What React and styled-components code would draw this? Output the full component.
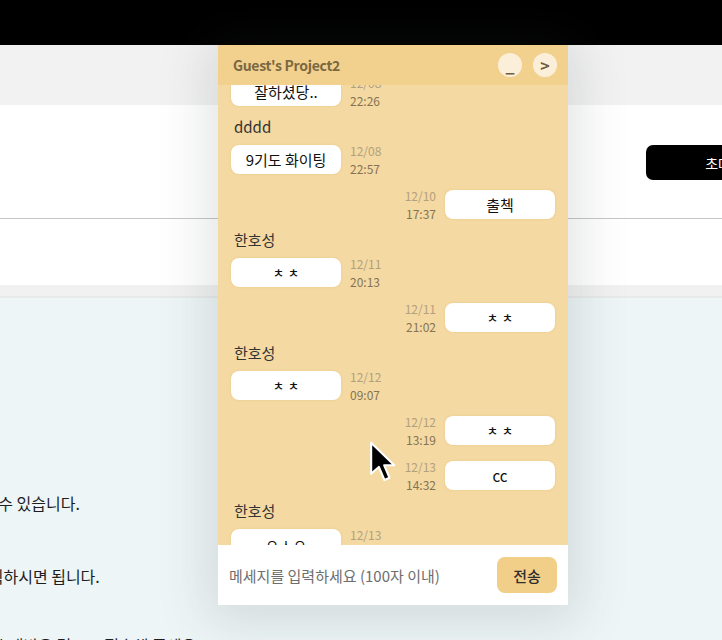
import React from "react";
import styled, { createGlobalStyle } from "styled-components";

const GlobalStyle = createGlobalStyle`
  html, body {
    margin: 0;
    padding: 0;
    overflow: hidden;
    font-family: "Noto Sans CJK KR", "Noto Sans", sans-serif;
  }
  * { box-sizing: border-box; }
`;

const messages = [
  { side: "left", text: "잘하셨당..", date: "12/08", time: "22:26" },
  { side: "left", name: "dddd", text: "9기도 화이팅", date: "12/08", time: "22:57" },
  { side: "right", text: "출첵", date: "12/10", time: "17:37" },
  { side: "left", name: "한호성", text: "ㅊㅊ", date: "12/11", time: "20:13", small: true },
  { side: "right", text: "ㅊㅊ", date: "12/11", time: "21:02", small: true },
  { side: "left", name: "한호성", text: "ㅊㅊ", date: "12/12", time: "09:07", small: true },
  { side: "right", text: "ㅊㅊ", date: "12/12", time: "13:19", small: true },
  { side: "right", text: "cc", date: "12/13", time: "14:32" },
  { side: "left", name: "한호성", text: "ㅇㅅㅇ", date: "12/13", time: "15:01" },
];

const App = () => {
  return (
    <>
      <GlobalStyle />
      <Page>
        <TopBar />
        <SubBar />
        <Hero>
          <HeroRow>
            <InviteButton>초대하기</InviteButton>
          </HeroRow>
          <HeroBottom />
        </Hero>
        <Band />
        <Content>
          <Line $shift={-20} $top={0}>할 수 있습니다.</Line>
          <Line $shift={-26} $top={49}>클릭하시면 됩니다.</Line>
          <Line $shift={-6} $top={45}>초대받은 링크로 접속해 주세요.</Line>
        </Content>
      </Page>

      <ChatWidget>
        <ChatHeader>
          <Title>Guest's Project2</Title>
          <HeaderButtons>
            <RoundButton>_</RoundButton>
            <RoundButton>&gt;</RoundButton>
          </HeaderButtons>
        </ChatHeader>
        <ChatBody>
          <MessageList>
            {messages.map((m, i) => (
              <MessageGroup key={i}>
                {m.name && <Name>{m.name}</Name>}
                <MessageRow $side={m.side}>
                  <Bubble $small={m.small}>{m.text}</Bubble>
                  <Stamp $side={m.side}>
                    <StampDate>{m.date}</StampDate>
                    <StampTime>{m.time}</StampTime>
                  </Stamp>
                </MessageRow>
              </MessageGroup>
            ))}
          </MessageList>
        </ChatBody>
        <InputBar>
          <MessageInput placeholder="메세지를 입력하세요 (100자 이내)" />
          <SendButton>전송</SendButton>
        </InputBar>
      </ChatWidget>

      <Cursor width="30" height="44" viewBox="0 0 14 20">
        <path
          d="M1 1 L1 15.5 L4.6 12.3 L7.2 18.4 L9.6 17.4 L7.1 11.5 L11.8 11.5 Z"
          fill="#000"
          stroke="#fff"
          strokeWidth="1"
          strokeLinejoin="round"
        />
      </Cursor>
    </>
  );
};

const Page = styled.div`
  width: 722px;
  height: 640px;
  overflow: hidden;
  display: flex;
  flex-direction: column;
`;

const TopBar = styled.div`
  height: 45px;
  background: #000;
  flex-shrink: 0;
`;

const SubBar = styled.div`
  height: 60px;
  background: #f2f2f2;
  flex-shrink: 0;
`;

const Hero = styled.div`
  background: #fff;
  flex-shrink: 0;
`;

const HeroRow = styled.div`
  height: 114px;
  display: flex;
  align-items: center;
  justify-content: flex-end;
  border-bottom: 1px solid #c6c6c6;
  padding-top: 2px;
`;

const HeroBottom = styled.div`
  height: 66px;
`;

const InviteButton = styled.button`
  width: 170px;
  height: 35px;
  margin-right: -94px;
  border: none;
  border-radius: 7px;
  background: #000;
  color: #fff;
  font-family: "Noto Sans CJK KR", sans-serif;
  font-size: 14px;
  text-align: center;
`;

const Band = styled.div`
  height: 13px;
  background: #f1f1f1;
  border-bottom: 2px solid #e8eaea;
  flex-shrink: 0;
`;

const Content = styled.div`
  flex: 1;
  background: #edf5f6;
  padding-top: 193px;
  display: flex;
  flex-direction: column;
`;

const Line = styled.p`
  margin: ${(p) => p.$top}px 0 0 ${(p) => p.$shift}px;
  font-size: 16px;
  line-height: 24px;
  font-weight: 400;
  color: #1e1e1e;
  white-space: nowrap;
`;

const ChatWidget = styled.div`
  position: absolute;
  left: 218px;
  top: 45px;
  width: 350px;
  height: 560px;
  display: flex;
  flex-direction: column;
  background: #f4d9a2;
  box-shadow: 0 6px 48px 10px rgba(60, 70, 70, 0.15);
`;

const ChatHeader = styled.div`
  height: 40px;
  flex-shrink: 0;
  display: flex;
  align-items: center;
  justify-content: space-between;
  padding: 0 11px 0 15px;
  background: #f2d08e;
  z-index: 1;
`;

const Title = styled.div`
  font-size: 14px;
  font-weight: 700;
  color: #7a6842;
  letter-spacing: -0.3px;
`;

const HeaderButtons = styled.div`
  display: flex;
  gap: 11px;
`;

const RoundButton = styled.button`
  width: 24px;
  height: 24px;
  border-radius: 50%;
  border: none;
  padding: 0;
  background: #fcefd9;
  color: #6e5c3c;
  font-family: "Noto Sans CJK KR", sans-serif;
  font-size: 16px;
  font-weight: 700;
  line-height: 22px;
`;

const ChatBody = styled.div`
  flex: 1;
  overflow: hidden;
`;

const MessageList = styled.div`
  margin-top: -8px;
  padding: 0 13px;
  display: flex;
  flex-direction: column;
  gap: 16px;
`;

const MessageGroup = styled.div`
  display: flex;
  flex-direction: column;
`;

const Name = styled.div`
  margin: -4px 0 9px 3px;
  font-size: 15px;
  line-height: 18px;
  color: #333;
`;

const MessageRow = styled.div`
  height: 29px;
  display: flex;
  align-items: center;
  gap: 9px;
  flex-direction: ${(p) => (p.$side === "right" ? "row-reverse" : "row")};
`;

const Bubble = styled.div`
  width: 110px;
  height: 29px;
  flex-shrink: 0;
  display: flex;
  align-items: center;
  justify-content: center;
  background: #fff;
  border-radius: 8px;
  box-shadow: 0 0 2px rgba(220, 180, 100, 0.5);
  font-size: ${(p) => (p.$small ? "12px" : "15px")};
  font-weight: ${(p) => (p.$small ? 500 : 400)};
  letter-spacing: ${(p) => (p.$small ? "4px" : "0")};
  text-indent: ${(p) => (p.$small ? "4px" : "0")};
  color: #111;
`;

const Stamp = styled.div`
  display: flex;
  flex-direction: column;
  align-items: ${(p) => (p.$side === "right" ? "flex-end" : "flex-start")};
  font-size: 12px;
  line-height: 18px;
`;

const StampDate = styled.span`
  color: #b3a07e;
`;

const StampTime = styled.span`
  color: #857353;
`;

const InputBar = styled.div`
  height: 60px;
  flex-shrink: 0;
  display: flex;
  align-items: center;
  gap: 10px;
  padding: 0 11px;
  background: #fff;
  z-index: 1;
`;

const MessageInput = styled.input`
  flex: 1;
  min-width: 0;
  border: none;
  outline: none;
  padding: 0;
  font-family: "Noto Sans CJK KR", sans-serif;
  font-size: 15px;
  color: #333;
  background: transparent;

  &::placeholder {
    color: #6e6e6e;
  }
`;

const SendButton = styled.button`
  width: 60px;
  height: 36px;
  border: none;
  border-radius: 8px;
  background: #f2cf88;
  color: #2e2e2e;
  font-family: "Noto Sans CJK KR", sans-serif;
  font-size: 15px;
  font-weight: 500;
`;

const Cursor = styled.svg`
  position: absolute;
  left: 369px;
  top: 440px;
  pointer-events: none;
`;

export default App;
